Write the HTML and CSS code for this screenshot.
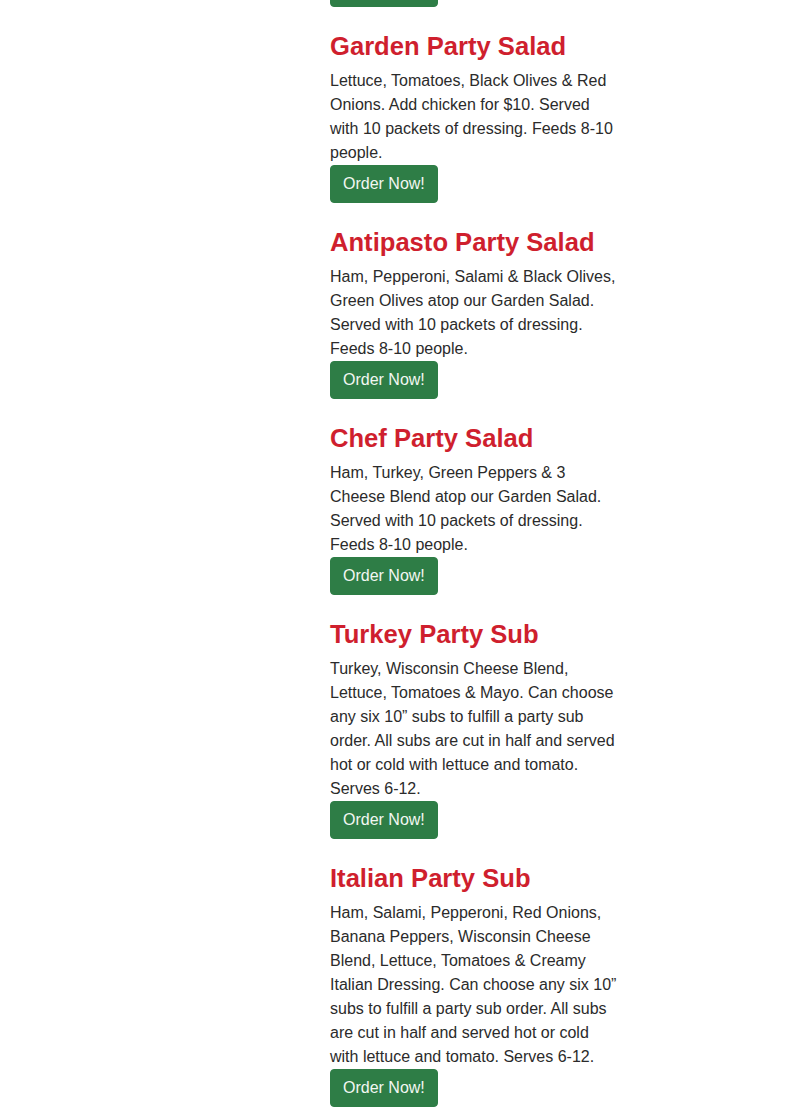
FILE: index.html
```html
<!DOCTYPE html>
<html>
<head>
<meta charset="utf-8">
<link rel="stylesheet" href="styles.css">
</head>
<body>
<div class="page">
  <div class="sidebar"></div>
  <main class="menu">
    <div class="item first">
      <a class="btn" href="#">Order Now!</a>
    </div>
    <div class="item">
      <h2 class="title">Garden Party Salad</h2>
      <p class="desc">Lettuce, Tomatoes, Black Olives &amp; Red Onions. Add chicken for $10. Served with 10 packets of dressing. Feeds 8-10 people.</p>
      <a class="btn" href="#">Order Now!</a>
    </div>
    <div class="item">
      <h2 class="title">Antipasto Party Salad</h2>
      <p class="desc">Ham, Pepperoni, Salami &amp; Black Olives, Green Olives atop our Garden Salad. Served with 10 packets of dressing. Feeds 8-10 people.</p>
      <a class="btn" href="#">Order Now!</a>
    </div>
    <div class="item">
      <h2 class="title">Chef Party Salad</h2>
      <p class="desc">Ham, Turkey, Green Peppers &amp; 3 Cheese Blend atop our Garden Salad. Served with 10 packets of dressing. Feeds 8-10 people.</p>
      <a class="btn" href="#">Order Now!</a>
    </div>
    <div class="item">
      <h2 class="title">Turkey Party Sub</h2>
      <p class="desc">Turkey, Wisconsin Cheese Blend, Lettuce, Tomatoes &amp; Mayo. Can choose any six 10” subs to fulfill a party sub order. All subs are cut in half and served hot or cold with lettuce and tomato. Serves 6-12.</p>
      <a class="btn" href="#">Order Now!</a>
    </div>
    <div class="item">
      <h2 class="title">Italian Party Sub</h2>
      <p class="desc">Ham, Salami, Pepperoni, Red Onions, Banana Peppers, Wisconsin Cheese Blend, Lettuce, Tomatoes &amp; Creamy Italian Dressing. Can choose any six 10” subs to fulfill a party sub order. All subs are cut in half and served hot or cold with lettuce and tomato. Serves 6-12.</p>
      <a class="btn" href="#">Order Now!</a>
    </div>
  </main>
</div>
</body>
</html>
```
FILE: styles.css
```css
html, body {
  margin: 0;
  padding: 0;
  background: #ffffff;
}
body {
  font-family: "Liberation Sans", Arial, sans-serif;
  font-size: 16px;
  line-height: 24px;
  color: #2b2b2b;
}
.page {
  display: grid;
  grid-template-columns: 330px 290px;
}
.menu {
  margin-top: -31px;
}
.item {
  display: flex;
  flex-direction: column;
  align-items: flex-start;
}
.title {
  margin: 24px 0 7px;
  font-size: 25.6px;
  line-height: 31px;
  font-weight: bold;
  color: #cf1f2e;
}
.desc {
  margin: 0;
}
.btn {
  display: inline-block;
  box-sizing: border-box;
  padding: 6px 12px;
  border: 1px solid #2e7d46;
  border-radius: 4px;
  background: #2e7d46;
  color: #f2f7f2;
  font-size: 16px;
  line-height: 24px;
  text-decoration: none;
}
```
